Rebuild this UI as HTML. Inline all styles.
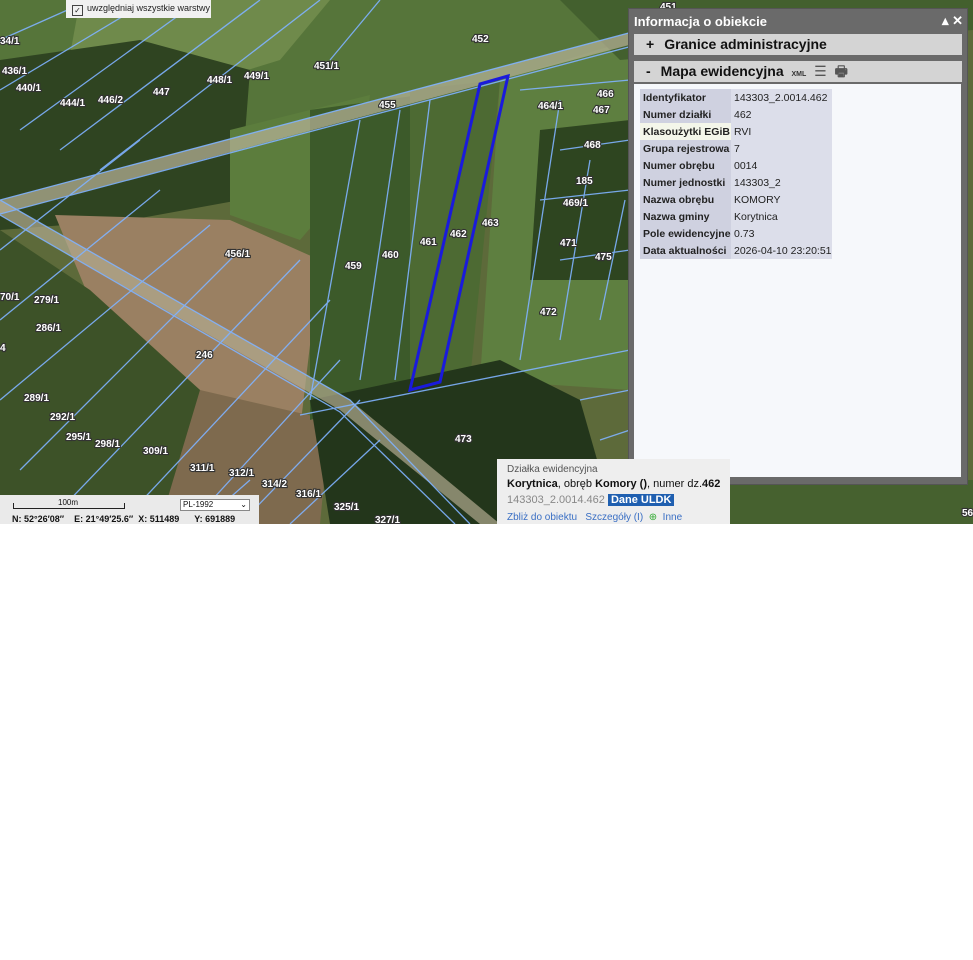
<!DOCTYPE html>
<html><head><meta charset="utf-8"><style>
body{margin:0;width:973px;height:960px;background:#fff;font-family:"Liberation Sans",sans-serif;overflow:hidden;position:relative}
#map{position:absolute;left:0;top:0;width:973px;height:524px;overflow:hidden;background:#5f6b3c}
.lb{font:bold 10px "Liberation Sans",sans-serif;fill:#fff;stroke:#333;stroke-width:2.2px;paint-order:stroke}
#panel{position:absolute;left:628px;top:8px;width:338px;height:475px;background:#6a6a6a;border:1px solid #555;z-index:1}
#panel .t{position:absolute;left:5px;top:5px;color:#fff;font-weight:bold;font-size:13px}
#panel .ic{position:absolute;right:4px;top:4px;color:#fff;font-size:13px;font-weight:bold}
.row{position:absolute;left:5px;width:328px;height:21px;background:#d4d4d4;font-weight:bold;font-size:14px;color:#111;line-height:21px}
#content{position:absolute;left:5px;top:75px;width:327px;height:393px;background:#f6f8fb}
table{position:absolute;left:6px;top:5px;border-collapse:collapse;font-size:10.5px;color:#222;table-layout:fixed}
td{height:17px;padding:0 0 0 3px;white-space:nowrap;overflow:hidden}
td.k{background:#cfd1e0;font-weight:bold;width:88px}
td.v{background:#dcdeea;width:96px}
#popup{z-index:2}
</style></head><body>
<div id="map">
<svg width="973" height="524" viewBox="0 0 973 524">
<rect width="973" height="524" fill="#5d6a3a"/>
<polygon points="0,0 620,0 600,60 400,100 0,210" fill="#56753a"/>
<polygon points="80,0 330,0 280,60 150,100 60,110" fill="#6f8a4b"/>
<polygon points="0,60 140,40 250,70 240,200 130,220 0,230" fill="#2f4421"/>
<polygon points="230,130 370,95 360,170 300,240 230,215" fill="#5c7d3d"/>
<polygon points="55,215 230,220 320,260 300,430 200,390 90,300" fill="#9a8062"/>
<polygon points="0,230 90,290 200,390 200,524 0,524" fill="#3d5228"/>
<polygon points="200,390 330,420 320,524 160,524" fill="#7e6a4e"/>
<polygon points="310,110 420,95 410,390 310,420" fill="#3c5a2a"/>
<polygon points="410,90 500,80 470,380 410,390" fill="#4d6a33"/>
<polygon points="500,80 630,40 630,390 480,380" fill="#5e7f40"/>
<polygon points="310,400 500,360 580,400 600,470 520,524 330,524" fill="#23361b"/>
<polygon points="540,130 630,120 630,280 530,280" fill="#2e4520"/>
<polygon points="560,0 973,0 973,30 620,60" fill="#43602e"/>
<polygon points="730,483 973,480 973,524 730,524" fill="#46612f"/>
<polygon points="0,200 640,30 640,42 0,214" fill="#b9b49a" opacity=".7"/>
<polygon points="0,200 350,400 500,524 480,524 340,410 0,215" fill="#b0a98f" opacity=".7"/>
<g stroke="#7fb2ff" stroke-width="1.3" fill="none" opacity=".9">
<path d="M0,40 L90,0 M0,90 L150,0 M20,130 L200,0 M60,150 L260,0 M100,170 L320,0 M0,250 L140,140 M0,320 L160,190 M0,400 L210,225 M20,470 L240,250 M60,510 L300,260 M120,524 L330,300 M190,524 L340,360 M240,524 L360,400 M290,524 L380,440 M310,400 L360,120 M360,380 L400,110 M395,380 L430,100 M520,360 L560,100 M560,340 L590,160 M600,320 L625,200 M0,200 L640,30 M0,214 L640,44 M0,200 L350,400 L470,524 M0,215 L340,412 L455,524 M300,415 L630,350 M520,90 L630,80 M560,150 L630,140 M540,200 L630,190 M560,260 L630,250 M580,400 L630,390 M600,440 L630,430 M250,480 L200,524 M380,0 L330,60"/>
</g>
<polygon points="480,84 508,76 440,382 410,390" fill="none" stroke="#1a1adc" stroke-width="3"/>
<g class="lb">
<text x="0" y="44">34/1</text><text x="2" y="74">436/1</text><text x="16" y="91">440/1</text><text x="60" y="106">444/1</text><text x="98" y="103">446/2</text><text x="153" y="95">447</text><text x="207" y="83">448/1</text><text x="244" y="79">449/1</text><text x="314" y="69">451/1</text><text x="472" y="42">452</text><text x="660" y="10">451</text><text x="379" y="108">455</text><text x="538" y="109">464/1</text><text x="597" y="97">466</text><text x="593" y="113">467</text><text x="584" y="148">468</text><text x="576" y="184">185</text><text x="563" y="206">469/1</text><text x="560" y="246">471</text><text x="595" y="260">475</text><text x="540" y="315">472</text><text x="225" y="257">456/1</text><text x="345" y="269">459</text><text x="382" y="258">460</text><text x="420" y="245">461</text><text x="450" y="237">462</text><text x="482" y="226">463</text><text x="0" y="300">70/1</text><text x="34" y="303">279/1</text><text x="36" y="331">286/1</text><text x="0" y="351">4</text><text x="196" y="358">246</text><text x="24" y="401">289/1</text><text x="50" y="420">292/1</text><text x="66" y="440">295/1</text><text x="95" y="447">298/1</text><text x="143" y="454">309/1</text><text x="190" y="471">311/1</text><text x="229" y="476">312/1</text><text x="262" y="487">314/2</text><text x="296" y="497">316/1</text><text x="455" y="442">473</text><text x="334" y="510">325/1</text><text x="375" y="523">327/1</text><text x="962" y="516">56</text>
</g>
</svg>
<div style="position:absolute;left:66px;top:0;width:145px;height:18px;background:#f1f1f1;font-size:9px;line-height:16px;color:#222"><span style="display:inline-block;width:9px;height:9px;border:1px solid #444;margin:0 4px 0 6px;vertical-align:-2px;font-size:8px;line-height:9px;text-align:center">✓</span>uwzględniaj wszystkie warstwy</div>
<div style="position:absolute;left:0;top:495px;width:259px;height:29px;background:#eaeaea;font-size:9px;color:#111">
<div style="position:absolute;left:13px;top:8px;width:110px;height:5px;border:1px solid #222;border-top:none"></div>
<div style="position:absolute;left:58px;top:3px;font-size:8px">100m</div>
<div style="position:absolute;left:180px;top:4px;width:66px;height:10px;border:1px solid #888;background:#fff;font-size:8px;line-height:10px;padding-left:2px">PL-1992<span style="float:right;margin-right:2px">⌄</span></div>
<div style="position:absolute;left:12px;top:19px;font-weight:bold;white-space:nowrap">N: 52°26′08″&nbsp;&nbsp;&nbsp;&nbsp;E: 21°49′25.6″&nbsp;&nbsp;X: 511489&nbsp;&nbsp;&nbsp;&nbsp;&nbsp;&nbsp;Y: 691889</div>
</div>
<div id="popup" style="position:absolute;left:497px;top:459px;width:233px;height:65px;background:#eeeeee;font-size:10px;color:#555">
<div style="position:absolute;left:10px;top:5px">Działka ewidencyjna</div>
<div style="position:absolute;left:10px;top:19px;color:#111;font-size:11px;white-space:nowrap"><b>Korytnica</b>, obręb <b>Komory ()</b>, numer dz.<b>462</b></div>
<div style="position:absolute;left:10px;top:35px;color:#888;font-size:11px">143303_2.0014.462 <span style="background:#1f5fb0;color:#fff;font-weight:bold;padding:0 3px">Dane ULDK</span></div>
<div style="position:absolute;left:10px;top:53px;color:#3a6fc4;font-size:10px;white-space:nowrap">Zbliż do obiektu&nbsp;&nbsp;&nbsp;Szczegóły (I)&nbsp;&nbsp;<span style="color:#3a3">⊕</span>&nbsp;&nbsp;Inne</div>
</div>
<div id="panel">
<div class="t">Informacja o obiekcie</div><div class="ic">▴ ✕</div>
<div class="row" style="top:25px"><span style="margin:0 10px 0 12px">+</span>Granice administracyjne</div>
<div class="row" style="top:52px"><span style="margin:0 10px 0 12px">-</span>Mapa ewidencyjna <span style="font-size:7px;color:#333;margin-left:4px">XML</span> <span style="color:#555;font-weight:normal;margin-left:4px">☰</span> <span style="color:#555;margin-left:4px">🖶</span></div>
<div id="content">
<table>
<tr><td class="k">Identyfikator</td><td class="v">143303_2.0014.462</td></tr>
<tr><td class="k">Numer działki</td><td class="v">462</td></tr>
<tr><td class="k" style="background:#f4f6ea">Klasoużytki EGiB</td><td class="v">RVI</td></tr>
<tr><td class="k">Grupa rejestrowa</td><td class="v">7</td></tr>
<tr><td class="k">Numer obrębu</td><td class="v">0014</td></tr>
<tr><td class="k">Numer jednostki</td><td class="v">143303_2</td></tr>
<tr><td class="k">Nazwa obrębu</td><td class="v">KOMORY</td></tr>
<tr><td class="k">Nazwa gminy</td><td class="v">Korytnica</td></tr>
<tr><td class="k">Pole ewidencyjne</td><td class="v">0.73</td></tr>
<tr><td class="k">Data aktualności</td><td class="v">2026-04-10 23:20:51</td></tr>
</table>
</div>
</div>
</div>
</body></html>
